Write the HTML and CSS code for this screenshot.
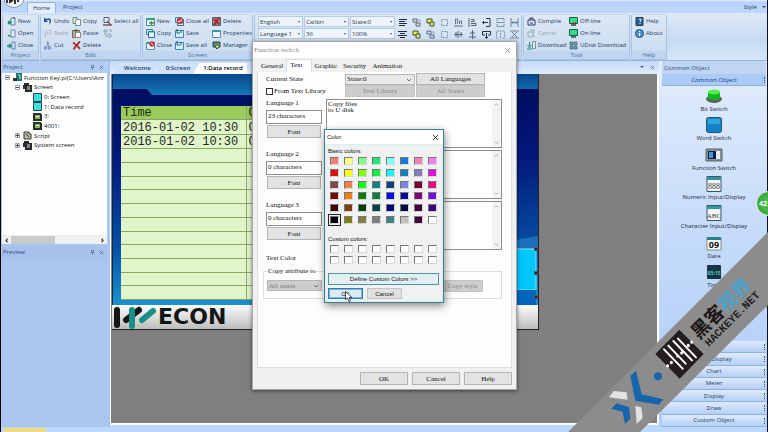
FILE: index.html
```html
<!DOCTYPE html>
<html lang="en">
<head>
<meta charset="utf-8">
<title>Function Key</title>
<link rel="stylesheet" href="styles.css">
</head>
<body>
<svg class="defs" aria-hidden="true">
  <symbol id="doc-new" viewBox="0 0 9 9"><path d="M4 1h4v7H4z" fill="#dbe9f6" stroke="#5580a8"/><circle cx="2.5" cy="5.5" r="2" fill="#27966a"/><path d="M6 0l2 2" stroke="#345"/></symbol>
  <symbol id="doc-open" viewBox="0 0 9 9"><path d="M4 1h4v7H4z" fill="#e6eff8" stroke="#6b8db0"/><path d="M1 6l3 2" stroke="#27966a" stroke-width="1.5"/></symbol>
  <symbol id="doc-close" viewBox="0 0 9 9"><path d="M5 1h3v7H5z" fill="#dbe9f6" stroke="#5580a8"/><path d="M0 5h4M2 3l2 2-2 2" stroke="#1c8a83" fill="none" stroke-width="1.3"/></symbol>
  <symbol id="undo" viewBox="0 0 9 9"><path d="M1 0v5h4L3.500 3.500C6 1.500 7.500 4 6 8 10 4 8-.5 2.500 2z" fill="#2a5597"/></symbol>
  <symbol id="redo" viewBox="0 0 9 9"><path d="M8 1v4H4l1.500-1.500C3 2 1.500 4 3 8-1 4 1 0 6.500 2z" fill="#e5ecf4" stroke="#9eacbd" stroke-width=".6"/></symbol>
  <symbol id="cut" viewBox="0 0 9 9"><path d="M4 0l2 6M6 1L3 6" stroke="#8093ab"/><circle cx="2.500" cy="7" r="1.300" fill="none" stroke="#5b7bab"/><circle cx="6.500" cy="7" r="1.300" fill="none" stroke="#5b7bab"/></symbol>
  <symbol id="copy" viewBox="0 0 9 9"><path d="M1 .5h4v6H1z" fill="#eef5ee" stroke="#588c74"/><path d="M3.500 2.500h5v6h-5z" fill="#f5f9ff" stroke="#76917f"/></symbol>
  <symbol id="paste" viewBox="0 0 9 9"><path d="M.5 1.500h7v7h-7z" fill="#b9b184" stroke="#716a4e"/><path d="M2.500.5h3v2h-3z" fill="#555"/><path d="M3.500 3.500h5v5h-5z" fill="#fff" stroke="#888"/></symbol>
  <symbol id="cross" viewBox="0 0 9 9"><path d="M1 1.500Q5 4 8 8M8 .5Q4 4 1.500 8.500" stroke="#b22a20" stroke-width="1.800" fill="none"/></symbol>
  <symbol id="selall" viewBox="0 0 9 9"><path d="M1 .5h5v5H1z" fill="none" stroke="#536685"/><path d="M0 8h9M4 4l4 4" stroke="#8c4b5b" stroke-width="1.300"/></symbol>
  <symbol id="multi" viewBox="0 0 9 9"><path d="M1 1h3v2H1zM6 1h2v2M1 5h2v3M5 5h3v3H5z" fill="none" stroke="#7d95ad" stroke-width=".8"/></symbol>
  <symbol id="win" viewBox="0 0 9 9"><path d="M.5 1.500h8v7h-8z" fill="#eef6fc" stroke="#528bab"/><path d="M.5 1h8v2h-8z" fill="#2f9e93"/></symbol>
  <symbol id="wins" viewBox="0 0 9 9"><path d="M.5.5h6v5h-6z" fill="#c7e7ed" stroke="#3981a0"/><path d="M2.500 2.500h6v6h-6z" fill="#e6f5f7" stroke="#276f90"/><path d="M2 3h7" stroke="#2f9e93"/></symbol>
  <symbol id="winplus" viewBox="0 0 9 9"><use href="#win"/><path d="M3 6h5M5.500 4v4" stroke="#3d9a31" stroke-width="1.500"/></symbol>
  <symbol id="winx" viewBox="0 0 9 9"><use href="#win"/><circle cx="6" cy="3" r="2.700" fill="#cf3038"/><path d="M4.800 2l2.500 2" stroke="#fff"/></symbol>
  <symbol id="winsx" viewBox="0 0 9 9"><use href="#wins"/><circle cx="5" cy="4" r="3.300" fill="#c03a45"/><path d="M3 5l4-2" stroke="#fff"/></symbol>
  <symbol id="windel" viewBox="0 0 9 9"><path d="M.5.5h8v8h-8z" fill="#9b8181" stroke="#575a68"/><path d="M2 2l5 5M7 1L2 8" stroke="#ad1d1d" stroke-width="1.700"/></symbol>
  <symbol id="save" viewBox="0 0 9 9"><path d="M.5 1.500h8v7h-8z" fill="#d6effb" stroke="#3c83ae"/><path d="M2 0v4h3M6 1v3" stroke="#1d5a80" fill="none"/></symbol>
  <symbol id="manager" viewBox="0 0 9 9"><path d="M1 1h7v5H1z" fill="#578f68" stroke="#264b46"/><path d="M3 5l2 3 3-3" fill="#dce26f" stroke="#334"/></symbol>
  <symbol id="compile" viewBox="0 0 9 9"><path d="M1 3h7v5H1z" fill="#e5ecfa" stroke="#25376a"/><path d="M3 3V1h3v2M3 6h3" stroke="#25376a" fill="none"/></symbol>
  <symbol id="stop" viewBox="0 0 9 9"><path d="M1 3h5v5H1zM3 1h4v3M5 5l3 3" fill="none" stroke="#9aa9b9"/></symbol>
  <symbol id="download" viewBox="0 0 9 9"><path d="M5.500.5h3v7h-3z" fill="#dfebf5" stroke="#7893a5"/><path d="M2.500 1v4M.5 4l2 3 2-3M0 8h5" stroke="#218c78" fill="none"/></symbol>
  <symbol id="monitor" viewBox="0 0 9 9"><path d="M.5.5h8v6h-8z" fill="#32dc85" stroke="#185d48"/><path d="M2 8h5" stroke="#345" stroke-width="1.300"/></symbol>
  <symbol id="monitoroff" viewBox="0 0 9 9"><use href="#monitor"/><path d="M4 5l3 3M7 5L4 8" stroke="#b53522"/></symbol>
  <symbol id="udisk" viewBox="0 0 9 9"><path d="M1 1h3v3H1zM5 1h3v3H5zM1 5h3v3H1zM5 5h3v3H5z" fill="#6fa6ae" stroke="#38596f" stroke-width=".7"/></symbol>
  <symbol id="book" viewBox="0 0 9 9"><path d="M1 .5h7v8H1z" fill="#2a5f8d" stroke="#1d3c5d"/><path d="M4 3c0-2 3-1 2 0L5 5M5 6v1" stroke="#fff" fill="none"/></symbol>
  <symbol id="info" viewBox="0 0 9 9"><circle cx="4.500" cy="4.500" r="4" fill="#4b90ca" stroke="#1d4f87"/><path d="M4.500 2v1M4.500 4v3" stroke="#fff" stroke-width="1.300"/></symbol>
  <symbol id="lines" viewBox="0 0 9 9"><path d="M1 1.500h8M1 3.500h6M1 5.500h8M1 7.500h6" stroke="#1f2c3b"/></symbol>
  <symbol id="linesc" viewBox="0 0 9 9"><path d="M0 1.500h9M2 3.500h5M0 5.500h9M2 7.500h5" stroke="#1f2c3b"/></symbol>
  <symbol id="group" viewBox="0 0 9 9"><path d="M1 1h4v3H1zM4 5h4v3H4z" fill="none" stroke="#53677e"/><path d="M6 2h2v2" fill="none" stroke="#8ca0b5"/></symbol>
  <symbol id="groupy" viewBox="0 0 9 9"><path d="M1 1h5v4H1z" fill="#eef04e" stroke="#3d5134"/><path d="M4 4h4v4H4z" fill="#d8e878" stroke="#3d5134"/></symbol>
  <symbol id="dashed" viewBox="0 0 9 9"><path d="M1.500 1.500h6v6h-6z" fill="none" stroke="#7c90a6" stroke-dasharray="2 1"/></symbol>
  <symbol id="alignb" viewBox="0 0 9 9"><path d="M0 8h9M1.500 6V1h2v5M5.500 6V3h2v3" stroke="#60748a" fill="none"/></symbol>
  <symbol id="alignl" viewBox="0 0 9 9"><path d="M1 0v9M3 1.500h3v2H3M3 5.500h5v2H3" stroke="#50657c" fill="none"/></symbol>
  <symbol id="alignm" viewBox="0 0 9 9"><path d="M0 4.500h9M2 2v5M4 1v7M7 2v5" stroke="#50657c" fill="none"/></symbol>
  <symbol id="alignc" viewBox="0 0 9 9"><path d="M4.500 0v9M2 3h5M1 7h7" stroke="#50657c" fill="none"/></symbol>
  <symbol id="enter" viewBox="0 0 9 9"><path d="M4 .5h4v8H4M0 4.500h6M2 3L.5 4.500 2 6" fill="none" stroke="#1f344b"/></symbol>
  <symbol id="enterd" viewBox="0 0 9 9"><path d="M.5 5V1.500h8V5H6M.5 5H3M4.500 3v5M3 7l1.500 1.500L6 7" fill="none" stroke="#1f344b"/></symbol>
  <symbol id="same" viewBox="0 0 9 9"><path d="M1 3V.5h7V3M1 6v2.500h7V6M0 4.500h9" fill="none" stroke="#7f93a9"/></symbol>
  <symbol id="samev" viewBox="0 0 9 9"><path d="M3 1H.5v7H3M6 1h2.500v7H6M4.500 0v9" fill="none" stroke="#7f93a9" stroke-dasharray="2 1"/></symbol>
  <symbol id="spread" viewBox="0 0 9 9"><path d="M1 0v9M8 0v9M1 4.500h7M3 3v3M6 3v3" fill="none" stroke="#6f849b"/></symbol>
  <symbol id="spreadx" viewBox="0 0 9 9"><path d="M0 1h9M0 8h9M2 2l5 5M7 2L2 7" fill="none" stroke="#6f849b"/></symbol>
  <symbol id="pin" viewBox="0 0 6 6"><path d="M2 0h3M2 0v3M4 0v3M1 3h4M3 3v3" fill="none" stroke="#42608b" stroke-width=".8"/></symbol>
  <symbol id="x" viewBox="0 0 6 6"><path d="M1 1l4 4M5 1L1 5" fill="none" stroke="currentColor" stroke-width=".8"/></symbol>
  <symbol id="up" viewBox="0 0 6 6"><path d="M1 4l2-2 2 2" fill="none" stroke="currentColor" stroke-width=".8"/></symbol>
  <symbol id="down" viewBox="0 0 6 6"><path d="M1 2l2 2 2-2" fill="none" stroke="currentColor" stroke-width=".8"/></symbol>
  <symbol id="minus" viewBox="0 0 5 5"><path d="M.5.5h4v4h-4z" fill="#fff" stroke="#9aa4b0"/><path d="M1 2.500h3" stroke="#445"/></symbol>
  <symbol id="plus" viewBox="0 0 5 5"><use href="#minus"/><path d="M2.500 1v3" stroke="#445"/></symbol>
  <symbol id="sheet" viewBox="0 0 9 9"><path d="M.5.5h8v8h-8z" fill="#3de0e0" stroke="#245"/></symbol>
  <symbol id="folder" viewBox="0 0 9 9"><path d="M0 1h8v1h1v7H0z" fill="#24302a"/><path d="M2 3h5v4H2z" fill="#8fae55"/><path d="M3 4h3v1H3z" fill="#dfe"/></symbol>
  <symbol id="stack" viewBox="0 0 9 9"><path d="M1 0h5v2h3v7H2V6H0V2h1z" fill="#2b2b2b"/><path d="M4 4h3M4 6h3" stroke="#ddd"/></symbol>
  <symbol id="script" viewBox="0 0 9 9"><path d="M1 1h5v2h2v5H1z" fill="#b9bda6" stroke="#333"/><path d="M3 3l3 3" stroke="#233"/></symbol>
  <symbol id="proj" viewBox="0 0 9 9"><path d="M3 0h6v8H3z" fill="#1d7b68"/><path d="M0 5h4v3H0z" fill="#333"/><path d="M5 2h2v4" stroke="#bde" fill="none"/></symbol>
</svg>

<div class="app">
  <header class="titlebar">
    <svg class="orb" viewBox="0 0 22 9" aria-hidden="true"><ellipse cx="11" cy="-1" rx="10" ry="8.500" fill="#eef0f3" stroke="#8c98aa"/><path d="M4 0v3M7 0v2l3-2M12 0v4M15 0v2" stroke="#222" stroke-width="1.800"/></svg>
    <nav class="ribbon-tabs"><a class="ribbon-tab active" href="#home">Home</a><a class="ribbon-tab" href="#project">Project</a></nav>
    <button class="style-menu">Style<i class="caret"></i></button>
  </header>

  <section class="ribbon" id="home">
    <div class="group g-project">
      <div class="cmds">
        <button><svg><use href="#doc-new"/></svg>New</button><button><svg><use href="#doc-open"/></svg>Open</button><button><svg><use href="#doc-close"/></svg>Close</button>
      </div><h2>Project</h2>
    </div>
    <div class="group g-edit">
      <div class="cmds">
        <button><svg><use href="#undo"/></svg>Undo</button><button disabled><svg><use href="#redo"/></svg>Redo</button><button><svg><use href="#cut"/></svg>Cut</button>
        <button><svg><use href="#copy"/></svg>Copy</button><button><svg><use href="#paste"/></svg>Paste</button><button><svg><use href="#cross"/></svg>Delete</button>
        <button><svg><use href="#selall"/></svg>Select all</button><button aria-label="Multiple copy"><svg><use href="#multi"/></svg></button>
      </div><h2>Edit</h2>
    </div>
    <div class="group g-screen">
      <div class="cmds">
        <button><svg><use href="#winplus"/></svg>New</button><button><svg><use href="#wins"/></svg>Copy</button><button><svg><use href="#winx"/></svg>Close</button>
        <button><svg><use href="#winsx"/></svg>Close all</button><button><svg><use href="#save"/></svg>Save</button><button><svg><use href="#save"/></svg>Save all</button>
        <button><svg><use href="#windel"/></svg>Delete</button><button><svg><use href="#win"/></svg>Properties</button><button><svg><use href="#manager"/></svg>Manager</button>
      </div><h2>Screen</h2>
    </div>
    <div class="group g-format">
      <div class="combos">
        <span class="combo"><select aria-label="Language"><option>English</option></select></span>
        <span class="combo"><select aria-label="Font family"><option>Calibri</option></select></span>
        <span class="combo"><select aria-label="State"><option>State:0</option></select></span>
        <span class="combo"><select aria-label="Text language"><option>Language 1</option></select></span>
        <span class="combo"><select aria-label="Font size"><option>36</option></select></span>
        <span class="combo"><select aria-label="Zoom"><option>100%</option></select></span>
      </div>
      <div class="tools">
        <button aria-label="Align text"><svg><use href="#lines"/></svg></button><button aria-label="Group"><svg><use href="#group"/></svg></button><button aria-label="Bring to front"><svg><use href="#groupy"/></svg></button><button aria-label="Rotate"><svg><use href="#dashed"/></svg></button><button aria-label="Align bottom"><svg><use href="#alignb"/></svg></button><button aria-label="Align left"><svg><use href="#alignl"/></svg></button><button aria-label="Move left"><svg><use href="#enter"/></svg></button><button aria-label="Same width"><svg><use href="#same"/></svg></button><button aria-label="Space across"><svg><use href="#spread"/></svg></button>
        <button aria-label="Center text"><svg><use href="#linesc"/></svg></button><button aria-label="Send to back"><svg><use href="#groupy"/></svg></button><button aria-label="Ungroup"><svg><use href="#group"/></svg></button><button aria-label="Flip"><svg><use href="#dashed"/></svg></button><button aria-label="Align middle"><svg><use href="#alignm"/></svg></button><button aria-label="Align center"><svg><use href="#alignc"/></svg></button><button aria-label="Move down"><svg><use href="#enterd"/></svg></button><button aria-label="Same height"><svg><use href="#samev"/></svg></button><button aria-label="Space down"><svg><use href="#spreadx"/></svg></button>
      </div>
    </div>
    <div class="group g-tool">
      <div class="cmds">
        <button><svg><use href="#compile"/></svg>Compile</button><button disabled><svg><use href="#stop"/></svg>Cancel</button><button><svg><use href="#download"/></svg>Download</button>
        <button><svg><use href="#monitoroff"/></svg>Off-line</button><button><svg><use href="#monitor"/></svg>On-line</button><button><svg><use href="#udisk"/></svg>UDisk Download</button>
      </div><h2>Tool</h2>
    </div>
    <div class="group g-help">
      <div class="cmds"><button><svg><use href="#book"/></svg>Help</button><button><svg><use href="#info"/></svg>About</button></div><h2>Help</h2>
    </div>
  </section>

  <main class="workspace">
    <aside class="side">
      <div class="pane-head"><span>Project</span><svg><use href="#pin"/></svg><svg><use href="#x"/></svg></div>
      <div class="tree-box">
        <ul class="tree">
          <li class="l0"><svg class="tw"><use href="#minus"/></svg><svg><use href="#proj"/></svg>Function Key.pi(C:\Users\Anr</li>
          <li class="l1"><svg class="tw"><use href="#minus"/></svg><svg><use href="#stack"/></svg>Screen</li>
          <li class="l2"><svg><use href="#sheet"/></svg>0: Screen</li>
          <li class="l2"><svg><use href="#sheet"/></svg>1: Data record</li>
          <li class="l2"><svg><use href="#folder"/></svg>3:</li>
          <li class="l2"><svg><use href="#folder"/></svg>4001:</li>
          <li class="l1"><svg class="tw"><use href="#plus"/></svg><svg><use href="#script"/></svg>Script</li>
          <li class="l1"><svg class="tw"><use href="#plus"/></svg><svg><use href="#stack"/></svg>System screen</li>
        </ul>
        <div class="hscroll"><b>‹</b><span></span><b>›</b></div>
      </div>
      <div class="pane-head preview-head"><span>Preview</span><svg><use href="#pin"/></svg><svg><use href="#x"/></svg></div>
      <div class="preview"></div>
    </aside>

    <section class="center">
      <nav class="doc-tabs">
        <a href="#w">Welcome</a><a href="#s0">0:Screen</a><a class="active" href="#s1">1:Data record</a>
        <span class="doc-ctl"><i class="caret"></i><svg><use href="#x"/></svg></span>
      </nav>
      <div class="desk">
        <div class="hmi">
          <svg class="hmi-bg" viewBox="0 0 427 232" preserveAspectRatio="none" aria-hidden="true">
            <defs>
              <linearGradient id="deep" x1="0" y1="0" x2="0" y2="1"><stop offset="0" stop-color="#000a5c"/><stop offset=".35" stop-color="#03187a"/><stop offset=".75" stop-color="#0650a4"/><stop offset="1" stop-color="#1b93cf"/></linearGradient>
              <linearGradient id="band" x1="0" y1="0" x2="0" y2="1"><stop offset="0" stop-color="#07488c"/><stop offset="1" stop-color="#1478b8"/></linearGradient>
            </defs>
            <path d="M0 0h427v232H0z" fill="url(#deep)"/>
            <path d="M0 0h427v15H300v6H40l-5-6H0z" fill="url(#band)"/>
            <path d="M380 172Q410 164 427 162V175H380z" fill="#2b86c8" opacity=".6"/>
            <path d="M0 0h1v232H0z" fill="#052a50"/>
            <path d="M350 175h75v41h-75z" fill="#00c6fc" stroke="#8ce6ff"/>
            <path d="M350 216h75v15h-75z" fill="#0565bd"/>
          </svg>
          <table class="record">
            <thead><tr><th>Time</th><th>C</th></tr></thead>
            <tbody>
              <tr><td>2016-01-02 10:30</td><td>C</td></tr><tr><td>2016-01-02 10:30</td><td>C</td></tr>
              <tr><td></td><td></td></tr><tr><td></td><td></td></tr><tr><td></td><td></td></tr><tr><td></td><td></td></tr><tr><td></td><td></td></tr><tr><td></td><td></td></tr><tr><td></td><td></td></tr><tr><td></td><td></td></tr><tr><td></td><td></td></tr><tr><td></td><td></td></tr><tr><td></td><td></td></tr>
            </tbody>
          </table>
          <div class="brand">
            <svg viewBox="0 0 44 24" aria-hidden="true"><g stroke-linecap="round" stroke-width="6"><path d="M5 5v15M14 15L27 5" stroke="#151515"/><path d="M20 5v16M30 15l11-9" stroke="#15908a"/></g></svg>
            <span>ECON</span>
          </div>
          <i class="handle h1"></i><i class="handle h2"></i><i class="handle h3"></i>
        </div>
      </div>
    </section>

    <aside class="objects">
      <div class="pane-head"><span>Common Object</span></div>
      <button class="bar first">Common Object</button>
      <ul class="palette">
        <li><svg viewBox="0 0 18 16"><ellipse cx="9" cy="11" rx="8" ry="4" fill="#5c6660"/><path d="M3 4v6q6 4 12 0V4z" fill="#0fb91f"/><ellipse cx="9" cy="4" rx="6" ry="2.500" fill="#52f04d"/></svg>Bit Switch</li>
        <li><svg viewBox="0 0 18 16"><rect x="1.500" y=".5" width="15" height="15" rx="2" fill="#1183c8" stroke="#2f526b"/><path d="M3 2h12v5H3z" fill="#31a5dc"/></svg>Word Switch</li>
        <li><svg viewBox="0 0 18 16"><path d="M1 2h16v12H1z" fill="#8a949b" stroke="#58636c"/><path d="M3 4h12v8H3z" fill="#0b1e46"/><path d="M4 5h4v6H4z" fill="#4d95ce"/><path d="M11 4h4v8h-4z" fill="#e6edf3"/></svg>Function Switch</li>
        <li><svg viewBox="0 0 18 16"><path d="M2 .5h14v15H2z" fill="#f1f5f3" stroke="#32576a"/><path d="M2 1h14v3H2z" fill="#37939c"/><text x="9" y="13" class="ic">888</text></svg>Numeric Input/Display</li>
        <li><svg viewBox="0 0 18 16"><path d="M2 .5h14v15H2z" fill="#f1f5f3" stroke="#32576a"/><path d="M2 1h14v3H2z" fill="#37939c"/><text x="9" y="13" class="ic abc">ABC</text></svg>Character Input/Display</li>
        <li><svg viewBox="0 0 18 16"><path d="M2 3h14v12H2z" fill="#fcfcf7" stroke="#7c8c86"/><path d="M2 2h14v3H2z" fill="#2d8185"/><text x="9" y="13" class="ic bold">09</text></svg>Date</li>
        <li><svg viewBox="0 0 18 16"><rect x="2" y="1" width="14" height="14" rx="1" fill="#183448"/><text x="9" y="11" class="ic led">05:15</text></svg>Time</li>
      </ul>
      <div class="bars">
        <button class="bar">Switch</button><button class="bar">Data Display</button><button class="bar">Chart</button><button class="bar">Meter</button><button class="bar">Display</button><button class="bar">Draw</button><button class="bar">Custom Object</button>
      </div>
    </aside>
  </main>
  <footer class="status"><span></span></footer>
</div>

<div class="dialog" role="dialog" aria-label="Function switch">
  <div class="dlg-title"><span>Function switch</span><button aria-label="Close"><svg><use href="#x"/></svg></button></div>
  <nav class="dlg-tabs"><a href="#g">General</a><a class="active" href="#t">Text</a><a href="#gr">Graphic</a><a href="#se">Security</a><a href="#an">Animation</a></nav>
  <div class="dlg-page">
    <div class="state">
      <label for="cur">Current State</label>
      <span class="sel"><select id="cur"><option>State:0</option></select><svg><use href="#down"/></svg></span>
      <button>All Languages</button>
      <label class="check"><input type="checkbox">From Text Library</label>
      <button disabled>Text Library</button><button disabled>All States</button>
    </div>
    <div class="lang">
      <div class="lang-left"><label for="l1">Language 1</label><input id="l1" value="23 characters"><button>Font</button></div>
      <div class="area"><textarea aria-label="Language 1 text">Copy files
to U disk</textarea><span class="vs"><svg><use href="#up"/></svg><svg><use href="#down"/></svg></span></div>
    </div>
    <div class="lang">
      <div class="lang-left"><label for="l2">Language 2</label><input id="l2" value="0 characters"><button>Font</button></div>
      <div class="area"><textarea aria-label="Language 2 text"></textarea><span class="vs"><svg><use href="#up"/></svg><svg><use href="#down"/></svg></span></div>
    </div>
    <div class="lang">
      <div class="lang-left"><label for="l3">Language 3</label><input id="l3" value="0 characters"><button>Font</button></div>
      <div class="area"><textarea aria-label="Language 3 text"></textarea><span class="vs"><svg><use href="#up"/></svg><svg><use href="#down"/></svg></span></div>
    </div>
    <p class="tc">Text Color</p>
    <fieldset><legend>Copy attribute to</legend>
      <span class="sel off"><select disabled aria-label="Copy to states"><option>All states</option></select><svg><use href="#down"/></svg></span>
      <button disabled>Copy style</button>
    </fieldset>
  </div>
  <div class="dlg-foot"><button>OK</button><button>Cancel</button><button>Help</button></div>
</div>

<div class="color" role="dialog" aria-label="Color">
  <div class="color-title"><span>Color</span><button aria-label="Close"><svg><use href="#x"/></svg></button></div>
  <div class="color-body">
    <p>Basic colors:</p>
    <div class="swatches basic" id="basic"></div>
    <p class="custom-label">Custom colors:</p>
    <div class="swatches custom" id="custom"></div>
    <button class="define">Define Custom Colors &gt;&gt;</button>
    <div class="color-foot"><button class="primary">OK</button><button>Cancel</button></div>
  </div>
  <svg class="cursor" viewBox="0 0 8 11" aria-hidden="true"><path d="M.5.5v8l2-1.500 1.500 3.500 1.500-.7L4.200 6.500H7z" fill="#fff" stroke="#222" stroke-width=".8"/></svg>
</div>

<div class="bubble">42</div>

<svg class="ribbon-mark" viewBox="0 0 200 200" aria-hidden="true">
  <path d="M0 200L200 0v73L72 200z" fill="#8c8c8c"/>
  <g transform="translate(-56 56) scale(.3333)">
    <path d="M372 248L355 264 370 338 440 350 454 334 389 319z" fill="#1765ad"/>
    <path d="M314 346L298 362 332 371 339 408 355 392 351 357z" fill="#1765ad"/>
    <path d="M306 309L291 328 347 335 344 313zM370 354l4 54 18-18-4-32z" fill="#e2e2e2"/>
    <circle cx="438" cy="265" r="12" fill="#1765ad"/>
    <path d="M502 125l73 73-72 74-73-74z" fill="#231d1d"/>
    <g stroke="#fff" stroke-width="6" stroke-linecap="round"><path d="M456 184l56 58M469 173l52 54M484 159l56 58M498 152l54 56"/><path d="M467 233v1M478 223v1M539 162v1M529 172v1M497 203v1M509 194v1" stroke-width="9"/></g>
  </g>
  <g transform="translate(131 108) rotate(-45)"><text class="zh" x="0" y="0">黑客<tspan>视界</tspan></text></g>
  <g transform="translate(141 115) rotate(-45)"><text class="net" x="0" y="0">HACKEYE.NET</text></g>
</svg>
<script src="palette.js"></script>
</body>
</html>
```
FILE: palette.js
```js
const basic = [
  "#f08078", "#ffff80", "#80ff80", "#1ce880", "#80ffff", "#1478d8", "#f080b8", "#f080f0",
  "#e01010", "#ffff10", "#80ff10", "#10f040", "#10f8ff", "#1480b8", "#8080b8", "#e010e0",
  "#804848", "#f08048", "#10ff10", "#108080", "#104480", "#8080e0", "#780038", "#e80880",
  "#780808", "#f08010", "#087808", "#088040", "#0808f0", "#0808a0", "#780878", "#7808e8",
  "#400404", "#804004", "#044004", "#044040", "#040480", "#040440", "#400440", "#400480",
  "#000000", "#808010", "#808040", "#808080", "#408080", "#c0c0c0", "#400440", "#ffffff"
];
function fill(id, colors, kind) {
  const box = document.getElementById(id);
  colors.forEach((color, i) => {
    const swatch = document.createElement("button");
    swatch.style.backgroundColor = color;
    swatch.setAttribute("aria-label", kind + " " + (i + 1));
    if (color === "#000000") swatch.className = "chosen";
    box.appendChild(swatch);
  });
}
fill("basic", basic, "Basic color");
fill("custom", Array(16).fill("#ffffff"), "Custom color");
```
FILE: styles.css
```css
* { box-sizing: border-box; }
body { margin: 0; height: 100vh; overflow: hidden; position: relative; font: 6px/8px "Open Sans", "Noto Sans", sans-serif; color: #1c3a63; background: #bcd6fb; }
button, input, select, textarea { font: inherit; color: inherit; margin: 0; padding: 0; border: 0; border-radius: 0; background: none; appearance: none; }
a { color: inherit; text-decoration: none; }
h2, p, ul { margin: 0; padding: 0; font-size: inherit; font-weight: normal; list-style: none; }
svg { display: block; flex: none; }
.defs { position: absolute; width: 0; height: 0; }

.app { height: 100%; display: flex; flex-direction: column; border-left: 1px solid #000; border-right: 1px solid #10131c; }

/* Title bar and ribbon */
.titlebar { height: 13px; flex: none; display: flex; align-items: flex-end; padding-left: 26px; background: linear-gradient(#e5effc 0, #b8d2fb 2px, #bfd8fd); position: relative; }
.orb { position: absolute; left: 2px; top: 0; width: 22px; height: 9px; }
.ribbon-tabs { display: flex; flex: 1; }
.ribbon-tab { height: 11px; line-height: 11px; padding: 0 7px; }
.ribbon-tab.active { background: #e3eefb; border: 1px solid #93b4df; border-bottom: 0; border-radius: 2px 2px 0 0; line-height: 10px; padding: 0 5px; }
.style-menu { display: flex; align-items: center; gap: 5px; padding: 0 1px 2px 0; }

.ribbon { height: 48px; flex: none; display: flex; gap: 1px; padding: 1px 1px 0; background: linear-gradient(#dce8f6, #c6daf2 60%, #d5e6f8); border-bottom: 1px solid #98b6dc; }
.group { display: flex; flex-direction: column; border: 1px solid #a8c2e2; border-top-color: #c6d9ef; border-radius: 2px; height: 46px; background: linear-gradient(#dce8f5, #c8dbf0); overflow: hidden; flex: none; }
.cmds { display: grid; grid-auto-flow: column; grid-template-rows: repeat(3, 12px); padding-left: 4px; flex: 1; justify-content: start; }
.cmds button { display: flex; align-items: center; gap: 2px; white-space: nowrap; }
.cmds button:disabled { color: #98a5b5; }
.cmds svg, .tools svg, .tree svg { width: 9px; height: 9px; }
.group h2 { text-align: center; line-height: 9px; background: #bfd5f0; color: #4c6b98; }
.g-project { width: 37px; }
.g-edit { width: 101px; }
.g-edit .cmds { grid-template-columns: 29px 31px 34px; padding-left: 2px; }
.g-screen { width: 111px; }
.g-screen .cmds { grid-template-columns: 29px 37px 38px; padding-left: 3px; }
.g-format { flex: 1; flex-direction: row; padding: 1px 0 0 3px; }
.combos { display: grid; grid-template-columns: repeat(3, 45px); grid-template-rows: 11px 11px; gap: 1px; align-content: start; }
.combo { position: relative; display: flex; background: #eef4fb; border: 1px solid #b5c9e0; }
.combo select { width: 100%; padding-left: 1px; color: #25364d; }
.combo::after, .caret { content: ""; border: 2px solid transparent; border-top-color: #42546e; border-bottom: 0; }
.combo::after { position: absolute; right: 2px; top: 4px; border-width: 1px; border-top-width: 2px; }
.tools { display: grid; grid-template-columns: repeat(9, 14px); grid-auto-rows: 12px; justify-items: center; align-items: center; align-content: start; }
.g-tool { width: 107px; }
.g-tool .cmds { grid-template-columns: 42px 60px; padding-left: 3px; }
.g-help { width: 36px; margin-right: 99px; }
.g-help .cmds { padding-left: 3px; }

/* Workspace */
.workspace { flex: 1; min-height: 0; display: grid; grid-template-columns: 109px 1fr 108px; }
.pane-head { height: 12px; flex: none; display: flex; align-items: center; gap: 4px; padding: 0 4px 0 2px; background: #b3cdf1; color: #2d4f80; }
.pane-head span { flex: 1; }
.pane-head svg, .doc-ctl svg { width: 5px; height: 5px; color: #42608b; }
.side { display: flex; flex-direction: column; min-height: 0; background: #aac6ee; }
.side .pane-head { margin-right: 2px; }
.tree-box { flex: none; height: 171px; margin: 0 3px 0 1px; background: #fdfdfe; display: flex; flex-direction: column; overflow: hidden; }
.tree { height: 77px; flex: none; display: flex; flex-direction: column; color: #111; }
.tree li { flex: 1; display: flex; align-items: center; gap: 2px; white-space: nowrap; }
.l0 { padding-left: 3px; }
.l1 { padding-left: 13px; }
.l2 { padding-left: 31px; }
.tree .tw { width: 5px; height: 5px; margin-right: 1px; }
.hscroll { margin-top: auto; height: 9px; display: flex; align-items: center; background: #f0f0f1; color: #222; padding: 0 3px; gap: 3px; font-size: 9px; }
.hscroll span { width: 44px; height: 8px; background: #cbcbcd; margin-right: auto; }
.preview-head { margin-top: 2px; background: #a5c2ec; }
.preview { flex: 1; }

.center { display: flex; flex-direction: column; min-width: 0; min-height: 0; padding-bottom: 2px; }
.doc-tabs { height: 13px; flex: none; display: flex; align-items: flex-end; padding-left: 4px; background: linear-gradient(#c3daf8, #dfecfc); color: #1f3a68; }
.doc-tabs a { height: 11px; line-height: 11px; padding: 0 4px 0 10px; margin-right: 1px; font-weight: 600; clip-path: polygon(6px 0, 100% 0, 100% 100%, 0 100%); background: #d1e2f8; }
.doc-tabs .active { background: #fff; margin-left: -2px; color: #000; }
.doc-ctl { margin-left: auto; display: flex; gap: 6px; padding: 0 4px 4px; }
.doc-ctl .caret { margin-top: 1px; }
.desk { flex: 1; min-height: 0; background: #807e7e; border: 1px solid #fff; border-top: 0; border-width: 0 2px 2px 1px; padding-left: 1px; }
.hmi { width: 427px; display: flex; flex-direction: column; position: relative; border-right: 1px solid #222; border-bottom: 1px solid #222; }
.hmi-bg { position: absolute; left: 0; top: 0; width: 100%; height: 232px; }
.record { position: relative; margin: 32px 50px 5px 9px; height: 194px; border-collapse: collapse; table-layout: fixed; background: #e0f5c9; font: 12px/11px "Liberation Mono", monospace; color: #22281c; }
.record tr { height: 13px; }
.record th { background: #9bcb5b; font-weight: normal; text-align: left; }
.record th:first-child { width: 125px; }
.record td, .record th { padding: 2px 0 0 2px; border-bottom: 1px solid #86a866; border-right: 1px solid #86a866; white-space: nowrap; overflow: hidden; vertical-align: bottom; }
.brand { height: 24px; display: flex; align-items: center; gap: 2px; background: linear-gradient(#fdfdfd, #bdbdbd); position: relative; }
.brand svg { width: 44px; height: 24px; }
.brand span { font: bold 22px/24px "DejaVu Sans", sans-serif; color: #151515; }
.handle { position: absolute; width: 4px; height: 4px; right: 0; background: #14202c; border: 1px solid #4a5a66; }
.h1 { top: 173px; }
.h2 { top: 197px; }
.h3 { top: 221px; }

.objects { display: flex; flex-direction: column; min-height: 0; padding: 0 1px 0 3px; background: linear-gradient(#e2edfc, #c4daf9 50%, #aecbf8); }
.objects .pane-head { height: 13px; background: #c0d5f1; }
.bar { flex: 1; width: 100%; display: block; text-align: center; background: linear-gradient(#dfebfc, #b5cff5); border-bottom: 1px solid #8fb0df; position: relative; }
.bar::after { content: ""; position: absolute; right: 1px; top: 3px; height: 6px; border-right: 1px dotted #38588b; }
.bar.first { flex: none; height: 12px; background: #accaf6; color: #163b91; }
.palette { height: 205px; flex: none; display: flex; flex-direction: column; color: #15243d; }
.palette li { flex: 1; display: flex; flex-direction: column; align-items: center; justify-content: center; gap: 1px; }
.palette svg { width: 18px; height: 16px; }
.ic { font: 8px "Liberation Serif", serif; text-anchor: middle; fill: #444; }
.ic.abc { font-size: 7px; }
.ic.bold { font: bold 9px "Open Sans", sans-serif; fill: #111; }
.ic.led { font: bold 5px "Open Sans", sans-serif; fill: #4fd0b4; }
.bars { margin-top: auto; height: 86px; display: flex; flex-direction: column; }
.status { height: 5px; flex: none; background: #bcd8fc; padding: 1px 0 0 3px; }
.status span { display: block; width: 42px; height: 4px; background: #f1dc86; }

/* Function switch dialog */
.dialog { position: absolute; left: 252px; top: 41px; width: 265px; display: flex; flex-direction: column; background: #f0f0f0; border: 1px solid #a6a6aa; box-shadow: 0 1px 4px #0008; font: 7px/8px "Liberation Serif", serif; color: #111; }
.dlg-title { height: 16px; display: flex; align-items: center; justify-content: space-between; padding: 0 5px 0 1px; background: #fff; color: #8b8b8b; }
.dlg-title svg, .color-title svg { width: 7px; height: 7px; }
.dlg-tabs { display: flex; align-items: flex-end; height: 14px; padding-left: 5px; }
.dlg-tabs a { height: 11px; line-height: 10px; padding: 0 3px; }
.dlg-tabs .active { height: 13px; padding: 0 8px 0 3px; background: #fff; border: 1px solid #ddd; border-bottom: 0; }
.dlg-page { display: flex; flex-direction: column; gap: 2px; height: 296px; margin: 0 4px; padding: 0 9px 0 8px; background: #fdfdfd; border: 1px solid #ddd; border-top: 0; }
.state { display: grid; grid-template-columns: 78px 70px 69px; grid-template-rows: 12px 12px; column-gap: 1px; align-items: center; margin-top: 1px; height: 24px; }
.dialog button { white-space: nowrap; }
.state button, .lang-left button, .dlg-foot button, fieldset button { background: #e3e3e3; border: 1px solid #b5b5b5; line-height: 10px; height: 12px; }
.dialog button:disabled { background: #cdcdcd; color: #888; border-color: #c4c4c4; }
.sel { position: relative; display: flex; height: 11px; border: 1px solid #b5b5b5; background: #e9e9e9; }
.sel select { width: 100%; padding-left: 1px; opacity: 1; }
.sel svg { position: absolute; right: 2px; top: 2px; width: 6px; height: 6px; color: #555; }
.sel.off { background: #cdcdcd; color: #777; width: 55px; }
.check { display: flex; align-items: center; gap: 1px; white-space: nowrap; }
.check input { width: 7px; height: 7px; border: 1px solid #333; background: #fff; }
.lang { display: grid; grid-template-columns: 56px 1fr; column-gap: 4px; height: 49px; }
.lang-left { display: flex; flex-direction: column; gap: 1px; }
.lang-left label { height: 10px; }
.lang-left input { height: 14px; width: 100%; border: 1px solid #8d8d8d; background: #fff; padding: 0 1px 3px; }
.lang-left button { height: 13px; margin: 0 1px; }
.area { display: flex; border: 1px solid #8d8d8d; background: #fff; min-width: 0; }
.area textarea { flex: 1; min-width: 0; resize: none; line-height: 6px; padding: 1px; overflow: hidden; }
.vs { width: 9px; display: flex; flex-direction: column; justify-content: space-between; align-items: center; padding: 2px 0; background: #f3f3f3; color: #888; }
.vs svg { width: 5px; height: 5px; }
.tc { padding: 2px 0 3px; }
fieldset { margin: 0 0 0 -3px; padding: 5px 18px 6px 3px; border: 1px solid #ddd; display: flex; justify-content: space-between; min-width: 0; }
legend { padding: 0 1px; }
fieldset button { width: 41px; }
.dlg-foot { display: flex; justify-content: flex-end; gap: 4px; padding: 4px 4px 4px 0; }
.dlg-foot button { width: 48px; height: 13px; }

/* Color picker */
.color { position: absolute; left: 324px; top: 129px; width: 120px; background: #f0f1f1; border: 1px solid #3b7d92; box-shadow: 1px 3px 8px #0007; font: 6px/8px "Liberation Sans", Arial, sans-serif; color: #111; }
.color-title { height: 14px; display: flex; align-items: center; justify-content: space-between; padding: 0 4px 0 2px; background: #fff; }
.color-body { padding: 3px 4px 3px 3px; box-shadow: inset 0 0 3px #bfe4ec; }
.swatches { display: grid; grid-template-columns: repeat(8, 1fr); grid-auto-rows: 1fr; justify-items: center; align-items: center; }
.swatches button { width: 9px; height: 8px; border: 1px solid #d8d8d8; border-top-color: #777; border-left-color: #777; }
.swatches .chosen { outline: 1px solid #222; outline-offset: 1px; }
.basic { height: 71px; }
.custom { height: 23px; }
.custom-label { margin-top: 9px; }
.color-body .define { display: block; width: 100%; height: 12px; margin-top: 7px; border: 1px solid #4f93aa; background: #e2eef1; }
.color-foot { display: flex; gap: 4px; margin-top: 3px; }
.color-foot button { width: 35px; height: 11px; background: #e1e1e1; border: 1px solid #c4c4c4; line-height: 8px; }
.color-foot .primary { border: 1px solid #2f7fb3; box-shadow: inset 0 0 0 1px #7db8d8; background: #dcebf3; }
.cursor { position: absolute; left: 20px; top: 161px; width: 8px; height: 11px; }

/* Overlays */
.bubble { position: absolute; right: -13px; top: 191px; width: 25px; height: 25px; border-radius: 50%; background: radial-gradient(#57c457, #2d9a35); border: 1px solid #e5efe5; color: #fff; font: bold 7px/23px "Open Sans", sans-serif; padding-left: 2px; }
.ribbon-mark { position: absolute; right: 0; bottom: 0; width: 200px; height: 200px; }
.zh { font: bold 19px "Noto Sans CJK SC", sans-serif; fill: #1c1818; }
.zh tspan { fill: #4ba3cc; }
.net { font: bold 11px "Liberation Mono", monospace; fill: #222; }
```
